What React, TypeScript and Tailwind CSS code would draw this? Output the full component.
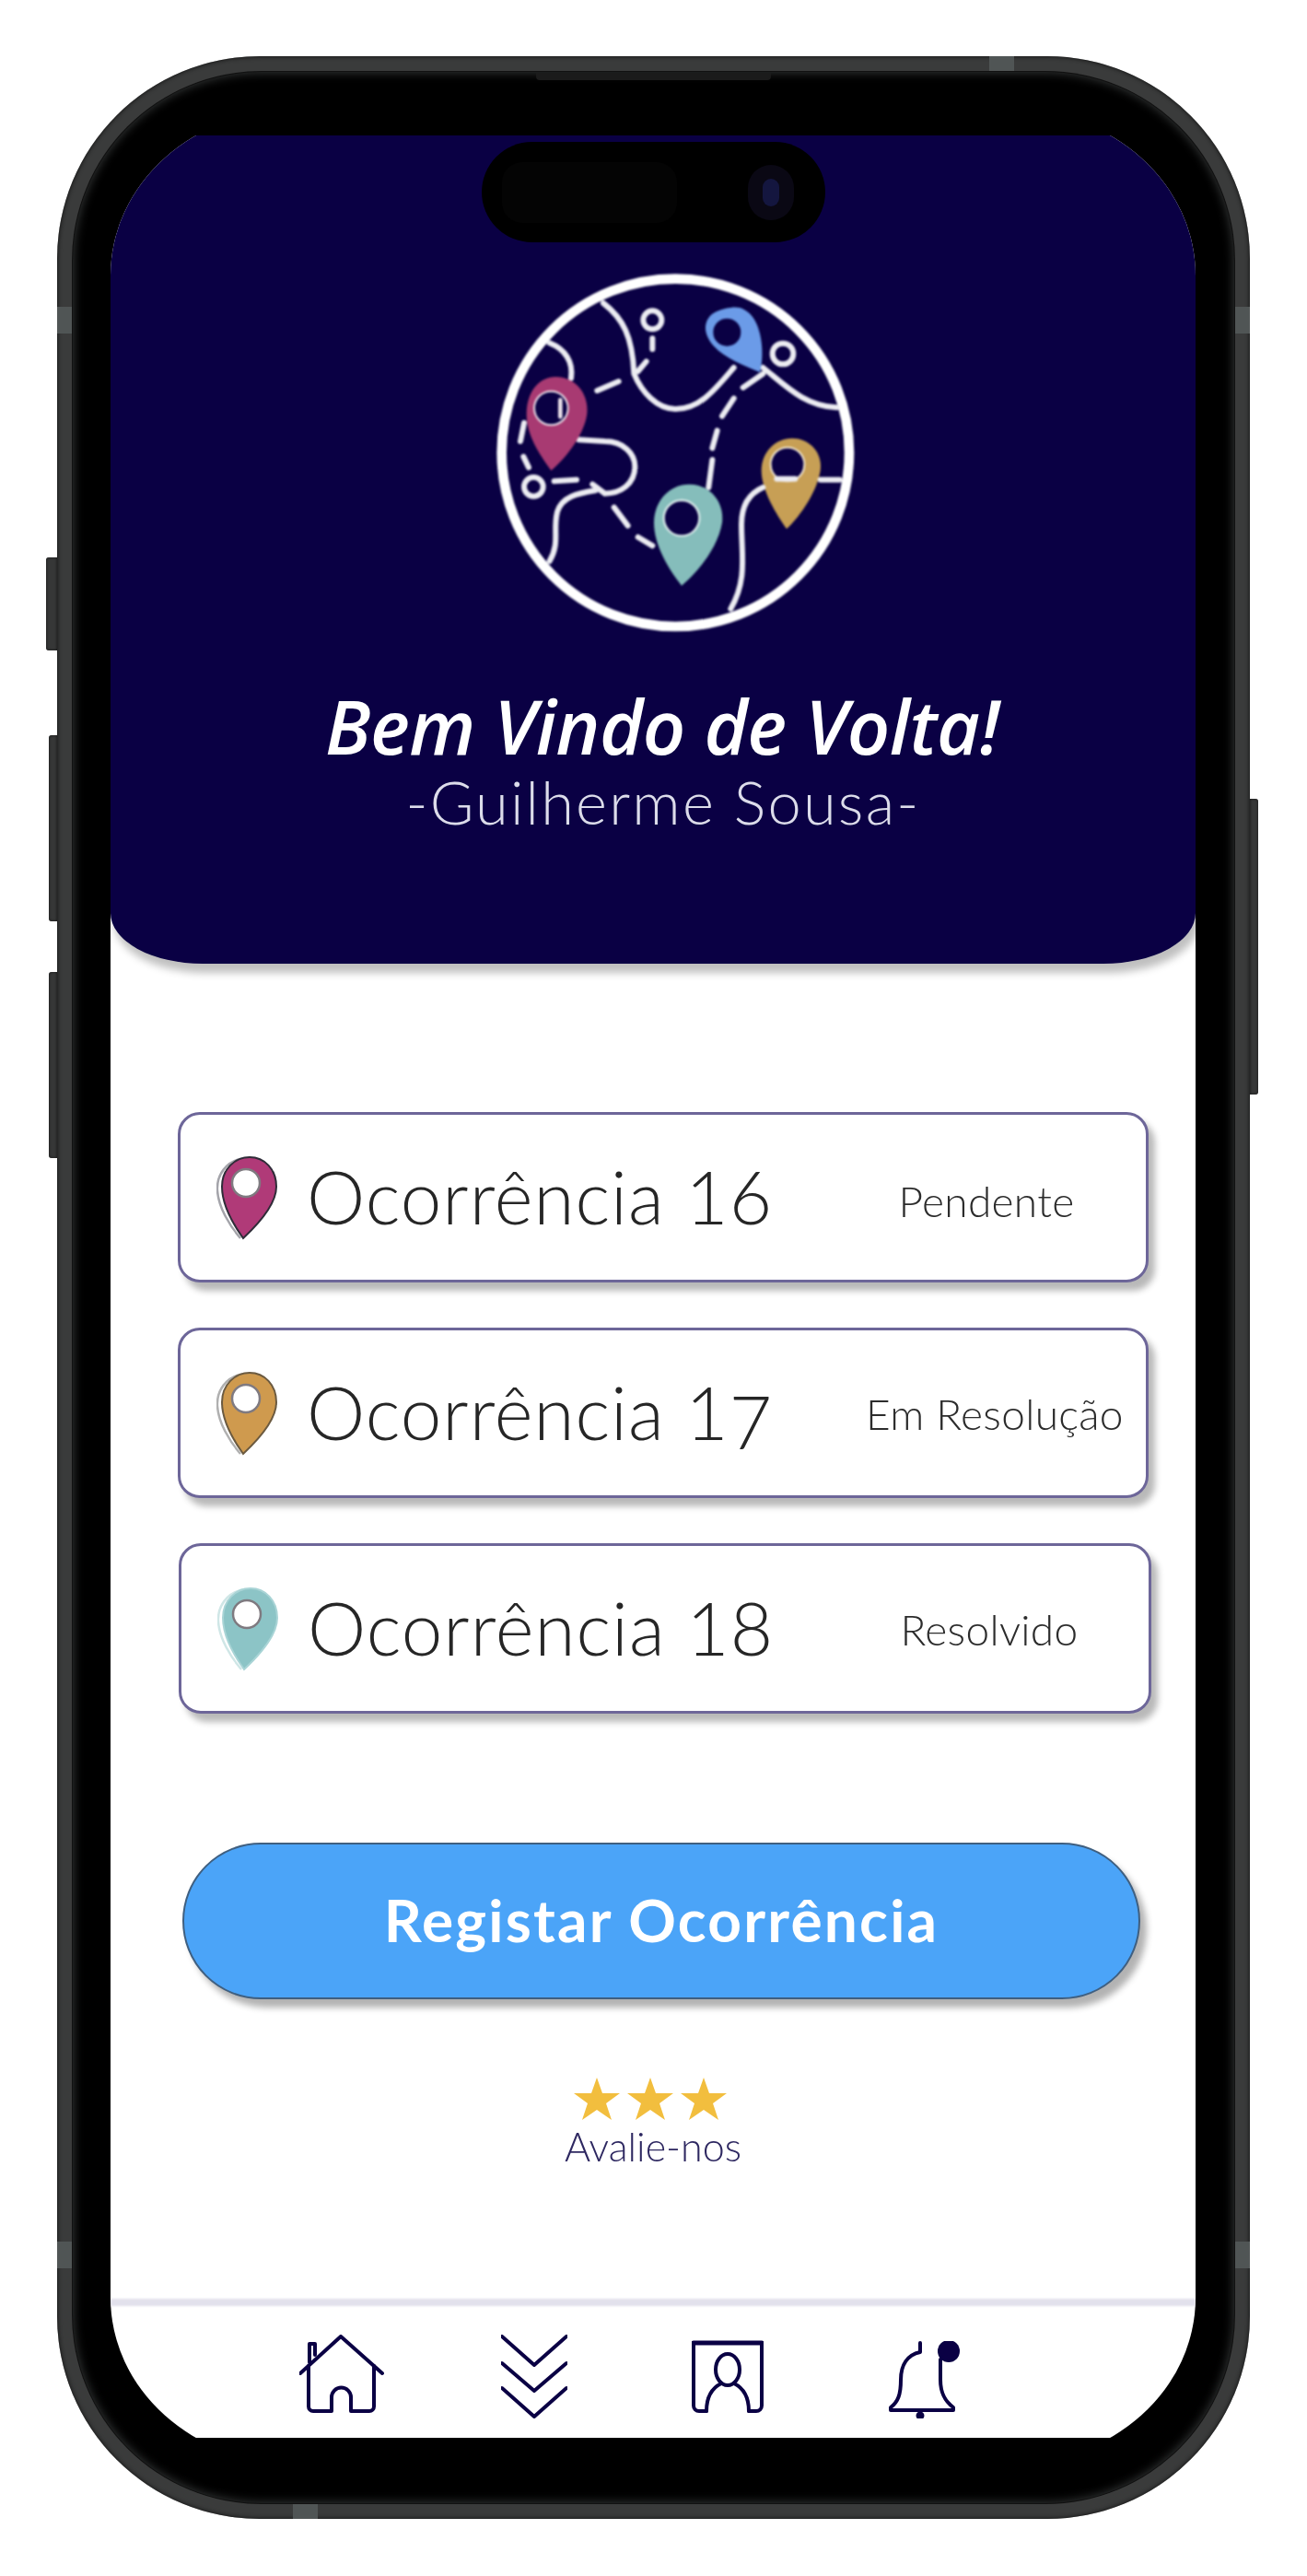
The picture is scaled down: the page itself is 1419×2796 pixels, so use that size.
import React from "react";

const NAVY = "#0a0044";

const occurrences = [
  { name: "Ocorrência 1", last: "6", status: "Pendente", color: "#b03a78", edge: "#2f2c38", ghost: "#a4a4aa", row: "w-[1054px]", statusBox: "pt-[7px]" },
  { name: "Ocorrência 1", last: "7", status: "Em Resolução", color: "#cf9a4e", edge: "#6b5a40", ghost: "#b0b0b0", row: "w-[1054px]", statusBox: "pl-[9px] pt-[1px]" },
  { name: "Ocorrência 1", last: "8", status: "Resolvido", color: "#8cc4c6", edge: "#a9d4d6", ghost: "#cfe6e6", row: "ml-[1px] w-[1056px]", statusBox: "pt-[1px]" },
];

function LogoMap() {
  return (
    <svg viewBox="0 0 1380 1320" className="ml-[42px] h-[440px] w-[460px] shrink-0 blur-[1px]" fill="none" strokeLinecap="round">
      <circle cx="700" cy="667" r="566" stroke="#fff" strokeWidth="32" />
      <g stroke="#ececf2" strokeWidth="18">
        <path d="M465 180C530 230 560 290 565 410C590 470 640 525 700 525C780 525 830 460 890 390" />
        <path d="M605 370L578 402" />
        <circle cx="625" cy="235" r="30" />
        <path d="M625 295V330" />
        <path d="M290 310C340 330 368 370 360 425" />
        <path d="M445 465L515 435" />
        <path d="M920 455L985 410M852 548L890 490M820 652L836 595M808 780L820 690" />
        <circle cx="1050" cy="345" r="34" />
        <path d="M985 390C1060 450 1120 515 1225 520" />
        <path d="M207 570L195 630M205 680L222 715" />
        <circle cx="238" cy="778" r="31" />
        <path d="M305 760L378 755" />
        <path d="M385 625L470 630C530 630 568 670 568 712C568 770 520 800 470 800L430 770" />
        <path d="M440 790C380 800 330 810 315 860C300 920 325 960 290 1020" />
        <path d="M500 845L545 905M578 942L625 970" />
      </g>
      <path d="M310 420C370 420 418 470 412 540C405 600 350 680 295 725C255 670 215 610 215 540C215 470 255 420 310 420Z" fill="#a83a72" />
      <circle cx="295" cy="522" r="55" fill={NAVY} stroke="#e9dfe8" strokeWidth="6" />
      <path d="M325 495V550" stroke="#e9dfe8" strokeWidth="14" />
      <path d="M880 195C930 185 965 230 975 280C985 320 985 370 975 405C930 385 860 360 825 320C790 280 790 240 820 215C835 205 860 197 880 195Z" fill="#6b9be8" />
      <circle cx="868" cy="275" r="45" fill={NAVY} />
      <path d="M745 770C810 770 860 825 852 895C840 970 780 1050 720 1100C680 1050 630 970 630 895C630 825 680 770 745 770Z" fill="#85bdbb" />
      <circle cx="720" cy="880" r="58" fill={NAVY} stroke="#d7e8e8" strokeWidth="7" />
      <path d="M1080 620C1135 620 1180 665 1172 725C1162 790 1110 870 1062 915C1030 870 980 790 980 725C980 665 1025 620 1080 620Z" fill="#c79f55" />
      <circle cx="1065" cy="705" r="55" fill={NAVY} stroke="#efe4cf" strokeWidth="6" />
      <g stroke="#ececf2" strokeWidth="18">
        <path d="M1030 752H1090M1172 755H1235" />
        <path d="M985 780C940 800 915 840 915 900C915 1000 935 1080 880 1175" />
      </g>
    </svg>
  );
}

function CardPin({ color, edge, ghost }: { color: string; edge: string; ghost: string }) {
  return (
    <svg viewBox="0 0 68 92" className="h-[92px] w-[68px] shrink-0" fill="none">
      <path d="M30 3C10 6 0 22 1 38C2 56 14 76 26 90" stroke={ghost} strokeWidth="2.5" />
      <path d="M36 2C52 2 65 15 65 34C65 54 44 76 29 90C19 76 6 54 6 34C6 15 20 2 36 2Z" fill={color} stroke={edge} strokeWidth="2" />
      <circle cx="32" cy="30" r="15" fill="#fff" stroke="#7f7a80" strokeWidth="2.5" />
    </svg>
  );
}

function Star() {
  return (
    <svg viewBox="0 0 50 46" className="h-[46px] w-[50px]">
      <polygon points="25,0 31,17 50,17 35,28 41,46 25,35 9,46 15,28 0,17 19,17" fill="#f2be3e" />
    </svg>
  );
}

function HomeIcon() {
  return (
    <svg viewBox="0 0 92 85" className="h-[85px] w-[92px]" fill="none" stroke={NAVY} strokeWidth="4" strokeLinecap="round" strokeLinejoin="round">
      <path d="M1 42L45 2L90 42" />
      <path d="M10 34V78a5 5 0 0 0 5 5H35V68a10.5 10.5 0 0 1 21 0V83H76a5 5 0 0 0 5-5V34" />
      <path d="M11 30V10H17V22" />
    </svg>
  );
}

function ChevronsIcon() {
  return (
    <svg viewBox="0 0 72 91" className="h-[91px] w-[72px]" fill="none" stroke={NAVY} strokeWidth="4" strokeLinecap="round" strokeLinejoin="round">
      <path d="M1 2L36 33L71 2" />
      <path d="M1 31L36 61L71 31" />
      <path d="M1 58L36 89L71 58" />
    </svg>
  );
}

function ContactIcon() {
  return (
    <svg viewBox="0 0 78 80" className="h-[80px] w-[78px]" fill="none" stroke={NAVY} strokeWidth="4" strokeLinecap="round" strokeLinejoin="round">
      <path d="M16 77H8a6 6 0 0 1-6-6V3H76V71a6 6 0 0 1-6 6H62" />
      <path d="M2 3H76" strokeWidth="5" />
      <ellipse cx="39" cy="32" rx="13" ry="17" />
      <path d="M16 77C16 62 22 52 32 47M62 77C62 62 56 52 46 47" />
    </svg>
  );
}

function BellIcon() {
  return (
    <svg viewBox="0 0 78 84" className="h-[84px] w-[78px]" fill="none" stroke={NAVY} strokeWidth="4" strokeLinecap="round" strokeLinejoin="round">
      <path d="M34 2V12C20 15 13 26 13 42C13 58 10 66 2 72V75H70V72C62 66 56 58 56 42V20" />
      <circle cx="34" cy="81" r="2.5" fill={NAVY} />
      <circle cx="65" cy="11" r="12" fill={NAVY} stroke="none" />
    </svg>
  );
}

export default function App() {
  return (
    <div className="h-[2796px] w-[1419px] overflow-hidden bg-white pl-[62px] pt-[61px] font-['Lato',sans-serif]">
      <div className="relative h-[2673px] w-[1295px] rounded-[220px] bg-[#3a3b3b] p-[17px] shadow-[inset_0_0_5px_#0c0c0c]">
        {/* side buttons */}
        <div className="absolute left-[-12px] top-[544px] h-[101px] w-[12px] rounded-l-[3px] bg-[#363737] shadow-[inset_0_0_3px_#111]" />
        <div className="absolute left-[-9px] top-[737px] h-[202px] w-[9px] rounded-l-[3px] bg-[#363737] shadow-[inset_0_0_3px_#111]" />
        <div className="absolute left-[-9px] top-[994px] h-[202px] w-[9px] rounded-l-[3px] bg-[#363737] shadow-[inset_0_0_3px_#111]" />
        <div className="absolute right-[-9px] top-[806px] h-[321px] w-[9px] rounded-r-[3px] bg-[#363737] shadow-[inset_0_0_3px_#111]" />

        {/* antenna bands */}
        <div className="absolute left-[1012px] top-0 h-[16px] w-[27px] bg-[#505555]" />
        <div className="absolute bottom-0 left-[256px] h-[16px] w-[27px] bg-[#505555]" />
        <div className="absolute left-0 top-[272px] h-[29px] w-[16px] bg-[#505555]" />
        <div className="absolute right-0 top-[272px] h-[29px] w-[16px] bg-[#505555]" />
        <div className="absolute left-0 top-[2372px] h-[29px] w-[16px] bg-[#505555]" />
        <div className="absolute right-0 top-[2372px] h-[29px] w-[16px] bg-[#505555]" />

        <div className="h-full w-full rounded-[205px] bg-black p-[41px] shadow-[inset_0_0_12px_#3c3f3f] ring-1 ring-[#111]">
          <div className="flex h-[2555px] w-[1178px] flex-col overflow-hidden rounded-[200px/180px] bg-black py-[28px]">
            <div className="flex h-[2499px] flex-col bg-white">
              <header className="flex h-[899px] shrink-0 flex-col items-center rounded-bl-[100px_55px] rounded-br-[100px_55px] bg-[#0a0044] pt-[122px] shadow-[4px_10px_8px_rgba(0,0,0,0.25)]">
                <LogoMap />
                <h1 className="ml-[20px] mt-[34px] font-['Open_Sans',sans-serif] text-[81px] font-semibold italic leading-[90px] tracking-[-0.5px] text-white blur-[0.6px]">
                  Bem Vindo de Volta!
                </h1>
                <p className="ml-[22px] mt-[4px] text-[65px] font-light leading-[66px] tracking-[2.2px] text-[#dcdcea] blur-[0.6px]">
                  -Guilherme Sousa-
                </p>
              </header>

              <div className="ml-[73px] mt-[161px] flex flex-col gap-[49px] blur-[0.7px]">
                {occurrences.map((o) => (
                  <div
                    key={o.status}
                    className={`flex h-[185px] items-center rounded-[24px] border-[3px] border-[#6d6699] bg-white pl-[39px] pr-[33px] shadow-[7px_9px_7px_rgba(0,0,0,0.28)] ${o.row}`}
                  >
                    <CardPin color={o.color} edge={o.edge} ghost={o.ghost} />
                    <span className="mb-[3px] ml-[30px] text-[80px] font-light leading-none tracking-[1px] text-[#262626]">
                      {o.name}
                      {o.last === "7" ? <span className="inline-block translate-y-[10px]">7</span> : o.last}
                    </span>
                    <span className={`ml-auto w-[280px] whitespace-nowrap text-center text-[46px] font-light tracking-[0.3px] text-[#2c2c2c] ${o.statusBox}`}>
                      {o.status}
                    </span>
                  </div>
                ))}
              </div>

              <button className="ml-[78px] mt-[140px] h-[170px] w-[1040px] shrink-0 rounded-full border-2 border-[#3f5f80] bg-[#4ba4f8] pb-[2px] text-[64px] font-bold tracking-[2.2px] text-white shadow-[7px_9px_7px_rgba(0,0,0,0.3)]">
                <span className="blur-[0.7px]">Registar Ocorrência</span>
              </button>

              <div className="ml-[503px] mt-[85px] flex w-[170px] gap-[8px] blur-[0.5px]">
                <Star />
                <Star />
                <Star />
              </div>
              <p className="mt-[6px] text-center text-[43px] font-light leading-[46px] text-[#2d2760] blur-[0.6px]">
                Avalie-nos
              </p>

              <div className="mt-auto h-[8px] shrink-0 bg-[#e2e1ec] blur-[1px]" />
              <nav className="flex h-[143px] shrink-0 items-start pl-[205px] pt-[31px] blur-[0.5px]">
                <HomeIcon />
                <div className="ml-[127px]">
                  <ChevronsIcon />
                </div>
                <div className="ml-[135px] mt-[6px]">
                  <ContactIcon />
                </div>
                <div className="ml-[136px] mt-[7px]">
                  <BellIcon />
                </div>
              </nav>
            </div>
          </div>
        </div>

        {/* speaker slit + dynamic island sit on top of the screen */}
        <div className="absolute left-[520px] top-[18px] h-[8px] w-[255px] rounded-b-[4px] bg-[#1b1b1b]" />
        <div className="absolute left-[461px] top-[93px] flex h-[109px] w-[373px] items-center rounded-[55px] bg-black pl-[22px]">
          <div className="h-[66px] w-[190px] rounded-[22px] bg-[#040404]" />
          <div className="ml-[77px] flex h-[60px] w-[50px] items-center justify-center rounded-full bg-[#0a0814]">
            <div className="h-[30px] w-[18px] rounded-full bg-[#14163f]" />
          </div>
        </div>
      </div>
    </div>
  );
}
